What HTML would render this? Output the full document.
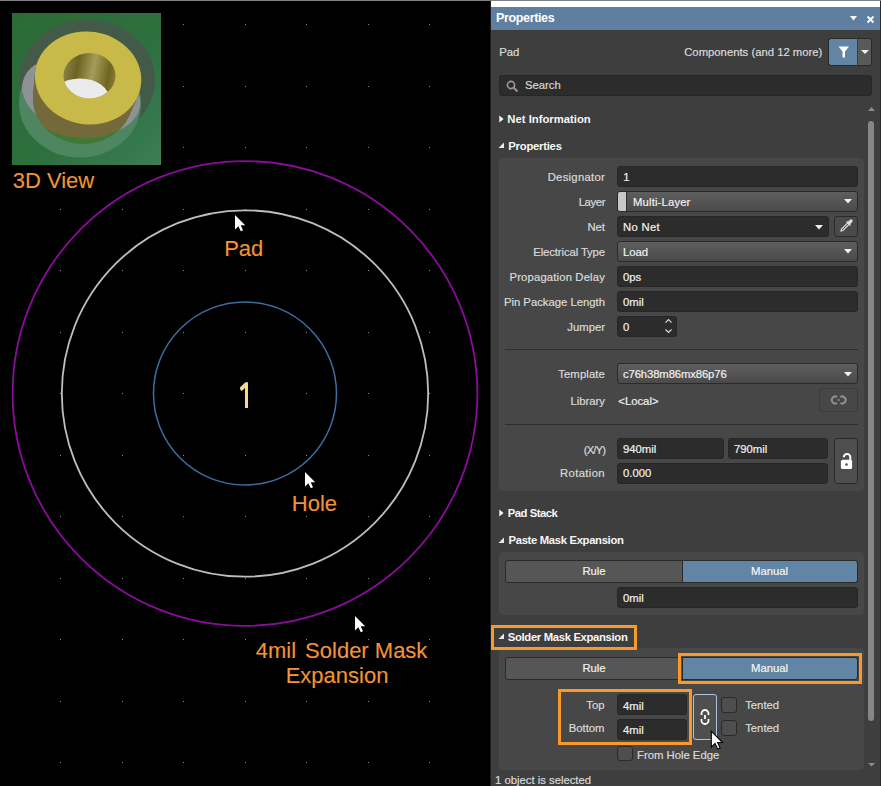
<!DOCTYPE html><html><head><meta charset="utf-8"><style>
html,body{margin:0;padding:0;}
body{width:881px;height:786px;background:#000;position:relative;overflow:hidden;font-family:"Liberation Sans",sans-serif;}
.t{position:absolute;white-space:pre;line-height:1;-webkit-text-stroke:0.2px currentColor;}
.r{position:absolute;box-sizing:border-box;}
svg{position:absolute;}
</style></head><body>
<svg width="491" height="786" style="left:0;top:0"><g fill="#8a8a8a"><rect x="60" y="24" width="1" height="1"/><rect x="60" y="86" width="1" height="1"/><rect x="60" y="147" width="1" height="1"/><rect x="60" y="209" width="1" height="1"/><rect x="60" y="270" width="1" height="1"/><rect x="60" y="332" width="1" height="1"/><rect x="60" y="393" width="1" height="1"/><rect x="60" y="455" width="1" height="1"/><rect x="60" y="516" width="1" height="1"/><rect x="60" y="578" width="1" height="1"/><rect x="60" y="639" width="1" height="1"/><rect x="60" y="701" width="1" height="1"/><rect x="60" y="762" width="1" height="1"/><rect x="122" y="24" width="1" height="1"/><rect x="122" y="86" width="1" height="1"/><rect x="122" y="147" width="1" height="1"/><rect x="122" y="209" width="1" height="1"/><rect x="122" y="270" width="1" height="1"/><rect x="122" y="332" width="1" height="1"/><rect x="122" y="393" width="1" height="1"/><rect x="122" y="455" width="1" height="1"/><rect x="122" y="516" width="1" height="1"/><rect x="122" y="578" width="1" height="1"/><rect x="122" y="639" width="1" height="1"/><rect x="122" y="701" width="1" height="1"/><rect x="122" y="762" width="1" height="1"/><rect x="183" y="24" width="1" height="1"/><rect x="183" y="86" width="1" height="1"/><rect x="183" y="147" width="1" height="1"/><rect x="183" y="209" width="1" height="1"/><rect x="183" y="270" width="1" height="1"/><rect x="183" y="332" width="1" height="1"/><rect x="183" y="393" width="1" height="1"/><rect x="183" y="455" width="1" height="1"/><rect x="183" y="516" width="1" height="1"/><rect x="183" y="578" width="1" height="1"/><rect x="183" y="639" width="1" height="1"/><rect x="183" y="701" width="1" height="1"/><rect x="183" y="762" width="1" height="1"/><rect x="245" y="24" width="1" height="1"/><rect x="245" y="86" width="1" height="1"/><rect x="245" y="147" width="1" height="1"/><rect x="245" y="209" width="1" height="1"/><rect x="245" y="270" width="1" height="1"/><rect x="245" y="332" width="1" height="1"/><rect x="245" y="393" width="1" height="1"/><rect x="245" y="455" width="1" height="1"/><rect x="245" y="516" width="1" height="1"/><rect x="245" y="578" width="1" height="1"/><rect x="245" y="639" width="1" height="1"/><rect x="245" y="701" width="1" height="1"/><rect x="245" y="762" width="1" height="1"/><rect x="306" y="24" width="1" height="1"/><rect x="306" y="86" width="1" height="1"/><rect x="306" y="147" width="1" height="1"/><rect x="306" y="209" width="1" height="1"/><rect x="306" y="270" width="1" height="1"/><rect x="306" y="332" width="1" height="1"/><rect x="306" y="393" width="1" height="1"/><rect x="306" y="455" width="1" height="1"/><rect x="306" y="516" width="1" height="1"/><rect x="306" y="578" width="1" height="1"/><rect x="306" y="639" width="1" height="1"/><rect x="306" y="701" width="1" height="1"/><rect x="306" y="762" width="1" height="1"/><rect x="368" y="24" width="1" height="1"/><rect x="368" y="86" width="1" height="1"/><rect x="368" y="147" width="1" height="1"/><rect x="368" y="209" width="1" height="1"/><rect x="368" y="270" width="1" height="1"/><rect x="368" y="332" width="1" height="1"/><rect x="368" y="393" width="1" height="1"/><rect x="368" y="455" width="1" height="1"/><rect x="368" y="516" width="1" height="1"/><rect x="368" y="578" width="1" height="1"/><rect x="368" y="639" width="1" height="1"/><rect x="368" y="701" width="1" height="1"/><rect x="368" y="762" width="1" height="1"/><rect x="429" y="24" width="1" height="1"/><rect x="429" y="86" width="1" height="1"/><rect x="429" y="147" width="1" height="1"/><rect x="429" y="209" width="1" height="1"/><rect x="429" y="270" width="1" height="1"/><rect x="429" y="332" width="1" height="1"/><rect x="429" y="393" width="1" height="1"/><rect x="429" y="455" width="1" height="1"/><rect x="429" y="516" width="1" height="1"/><rect x="429" y="578" width="1" height="1"/><rect x="429" y="639" width="1" height="1"/><rect x="429" y="701" width="1" height="1"/><rect x="429" y="762" width="1" height="1"/></g><circle cx="245" cy="393.5" r="232.4" fill="none" stroke="#8a0c9a" stroke-width="1.8"/><circle cx="245" cy="393.5" r="183.2" fill="none" stroke="#bebebe" stroke-width="1.8"/><circle cx="245" cy="393.5" r="91.5" fill="none" stroke="#416ca2" stroke-width="1.5"/><path transform="translate(235,215)" d="M0,0 L0,14.5 L3.4,11.2 L5.8,16.2 L8,15.2 L5.7,10.3 L10.2,10.3 Z" fill="#fff"/><path transform="translate(305,472)" d="M0,0 L0,14.5 L3.4,11.2 L5.8,16.2 L8,15.2 L5.7,10.3 L10.2,10.3 Z" fill="#fff"/><path transform="translate(355,616)" d="M0,0 L0,14.5 L3.4,11.2 L5.8,16.2 L8,15.2 L5.7,10.3 L10.2,10.3 Z" fill="#fff"/></svg>
<svg width="149" height="152" style="left:12px;top:13px" viewBox="12 13 149 152">
<defs>
<linearGradient id="gbg" x1="0" y1="0" x2="1" y2="1"><stop offset="0" stop-color="#2c6a35"/><stop offset="0.6" stop-color="#2f7040"/><stop offset="1" stop-color="#3b7e57"/></linearGradient>
<linearGradient id="hole" gradientUnits="userSpaceOnUse" x1="63" y1="70" x2="116" y2="80"><stop offset="0" stop-color="#8a8349"/><stop offset="0.25" stop-color="#6c6322"/><stop offset="0.55" stop-color="#a39c5a"/><stop offset="0.85" stop-color="#6f6520"/><stop offset="1" stop-color="#8b8034"/></linearGradient>
<clipPath id="hc"><ellipse cx="89.5" cy="75.7" rx="26" ry="22.7"/></clipPath>
<clipPath id="gc"><ellipse cx="80.7" cy="94" rx="60.2" ry="44" transform="rotate(5.7 80.7 94)"/></clipPath>
</defs>
<rect x="12" y="13" width="149" height="152" fill="url(#gbg)"/>
<ellipse cx="87.3" cy="80" rx="67.7" ry="60" fill="#435a48"/>
<ellipse cx="80" cy="103" rx="61" ry="54.6" fill="#4d8660"/>
<ellipse cx="81.2" cy="95" rx="59.9" ry="38.6" transform="rotate(12.5 81.2 95)" fill="#8e9297"/>
<path d="M33.0,98.0 L33.0,96.4 L33.1,94.8 L35.1,72.2 L35.3,70.6 L35.6,69.0 L35.9,67.4 L36.3,65.8 L36.7,64.3 L37.2,62.7 L37.8,61.2 L38.4,59.7 L39.1,58.2 L39.9,56.7 L40.7,55.3 L41.6,53.9 L42.5,52.5 L43.5,51.2 L44.5,49.9 L45.6,48.6 L46.8,47.4 L48.0,46.2 L49.2,45.0 L50.5,43.9 L51.8,42.8 L53.2,41.7 L54.6,40.7 L56.1,39.8 L57.6,38.9 L59.1,38.0 L60.7,37.2 L62.3,36.5 L63.9,35.8 L65.6,35.1 L67.3,34.5 L69.0,33.9 L70.8,33.5 L72.5,33.0 L74.3,32.6 L76.1,32.3 L77.9,32.0 L79.8,31.8 L81.6,31.6 L83.4,31.5 L85.3,31.5 L87.1,31.5 L89.0,31.5 L90.9,31.6 L92.7,31.8 L94.6,32.1 L96.4,32.3 L98.2,32.7 L100.0,33.1 L101.8,33.5 L103.6,34.0 L105.4,34.6 L107.1,35.2 L108.9,35.9 L110.6,36.6 L112.2,37.4 L113.9,38.2 L115.5,39.0 L117.0,40.0 L118.6,40.9 L120.1,41.9 L121.5,43.0 L123.0,44.1 L124.3,45.2 L125.7,46.4 L127.0,47.6 L128.2,48.8 L129.4,50.1 L130.6,51.4 L131.6,52.8 L132.7,54.1 L133.7,55.6 L134.6,57.0 L135.5,58.5 L136.3,59.9 L137.0,61.4 L137.7,63.0 L138.4,64.5 L138.9,66.1 L139.5,67.7 L139.9,69.3 L140.3,70.9 L140.6,72.5 L140.9,74.1 L141.1,75.7 L141.2,77.3 L141.3,79.0 L141.3,80.6 L141.2,82.2 L141.1,83.8 L140.9,85.4 L140.6,87.0 L140.3,88.6 L139.9,90.2 L139.5,91.7 L139.0,93.3 L138.4,94.8 L137.8,96.3 L129.4,115.2 L128.7,116.7 L127.9,118.2 L127.1,119.6 L126.3,121.0 L125.4,122.4 L124.5,123.7 L123.5,125.0 L122.4,126.3 L121.3,127.6 L120.2,128.8 L119.0,130.0 L117.7,131.1 L116.5,132.2 L115.1,133.2 L113.8,134.2 L112.4,135.2 L111.0,136.1 L109.5,137.0 L108.0,137.8 L106.5,138.6 L104.9,139.3 L103.3,140.0 L101.7,140.7 L100.1,141.2 L98.5,141.7 L96.8,142.2 L95.1,142.6 L93.4,143.0 L91.7,143.3 L90.0,143.6 L88.2,143.7 L86.5,143.9 L84.7,144.0 L83.0,144.0 L81.3,144.0 L79.5,143.9 L77.8,143.7 L76.0,143.6 L74.3,143.3 L72.6,143.0 L70.9,142.6 L69.2,142.2 L67.5,141.7 L65.9,141.2 L64.3,140.7 L62.7,140.0 L61.1,139.3 L59.5,138.6 L58.0,137.8 L56.5,137.0 L55.0,136.1 L53.6,135.2 L52.2,134.2 L50.9,133.2 L49.5,132.2 L48.3,131.1 L47.0,130.0 L45.8,128.8 L44.7,127.6 L43.6,126.3 L42.5,125.0 L41.5,123.7 L40.6,122.4 L39.7,121.0 L38.9,119.6 L38.1,118.2 L37.3,116.7 L36.6,115.2 L36.0,113.7 L35.4,112.2 L34.9,110.7 L34.5,109.1 L34.1,107.6 L33.8,106.0 L33.5,104.4 L33.3,102.8 L33.1,101.2 L33.0,99.6 Z" fill="#3e7a36"/>
<path d="M33.0,98.0 L33.0,96.4 L33.1,94.8 L35.1,72.2 L35.3,70.6 L35.6,69.0 L35.9,67.4 L36.3,65.8 L36.7,64.3 L37.2,62.7 L37.8,61.2 L38.4,59.7 L39.1,58.2 L39.9,56.7 L40.7,55.3 L41.6,53.9 L42.5,52.5 L43.5,51.2 L44.5,49.9 L45.6,48.6 L46.8,47.4 L48.0,46.2 L49.2,45.0 L50.5,43.9 L51.8,42.8 L53.2,41.7 L54.6,40.7 L56.1,39.8 L57.6,38.9 L59.1,38.0 L60.7,37.2 L62.3,36.5 L63.9,35.8 L65.6,35.1 L67.3,34.5 L69.0,33.9 L70.8,33.5 L72.5,33.0 L74.3,32.6 L76.1,32.3 L77.9,32.0 L79.8,31.8 L81.6,31.6 L83.4,31.5 L85.3,31.5 L87.1,31.5 L89.0,31.5 L90.9,31.6 L92.7,31.8 L94.6,32.1 L96.4,32.3 L98.2,32.7 L100.0,33.1 L101.8,33.5 L103.6,34.0 L105.4,34.6 L107.1,35.2 L108.9,35.9 L110.6,36.6 L112.2,37.4 L113.9,38.2 L115.5,39.0 L117.0,40.0 L118.6,40.9 L120.1,41.9 L121.5,43.0 L123.0,44.1 L124.3,45.2 L125.7,46.4 L127.0,47.6 L128.2,48.8 L129.4,50.1 L130.6,51.4 L131.6,52.8 L132.7,54.1 L133.7,55.6 L134.6,57.0 L135.5,58.5 L136.3,59.9 L137.0,61.4 L137.7,63.0 L138.4,64.5 L138.9,66.1 L139.5,67.7 L139.9,69.3 L140.3,70.9 L140.6,72.5 L140.9,74.1 L141.1,75.7 L141.2,77.3 L141.3,79.0 L141.3,80.6 L141.2,82.2 L141.1,83.8 L140.9,85.4 L140.6,87.0 L140.3,88.6 L139.9,90.2 L139.5,91.7 L139.0,93.3 L138.4,94.8 L137.8,96.3 L129.4,115.2 L128.7,116.7 L127.9,118.2 L127.1,119.6 L126.3,121.0 L125.4,122.4 L124.5,123.7 L123.5,125.0 L122.4,126.3 L121.3,127.6 L120.2,128.8 L119.0,130.0 L117.7,131.1 L116.5,132.2 L115.1,133.2 L113.8,134.2 L112.4,135.2 L111.0,136.1 L109.5,137.0 L108.0,137.8 L106.5,138.6 L104.9,139.3 L103.3,140.0 L101.7,140.7 L100.1,141.2 L98.5,141.7 L96.8,142.2 L95.1,142.6 L93.4,143.0 L91.7,143.3 L90.0,143.6 L88.2,143.7 L86.5,143.9 L84.7,144.0 L83.0,144.0 L81.3,144.0 L79.5,143.9 L77.8,143.7 L76.0,143.6 L74.3,143.3 L72.6,143.0 L70.9,142.6 L69.2,142.2 L67.5,141.7 L65.9,141.2 L64.3,140.7 L62.7,140.0 L61.1,139.3 L59.5,138.6 L58.0,137.8 L56.5,137.0 L55.0,136.1 L53.6,135.2 L52.2,134.2 L50.9,133.2 L49.5,132.2 L48.3,131.1 L47.0,130.0 L45.8,128.8 L44.7,127.6 L43.6,126.3 L42.5,125.0 L41.5,123.7 L40.6,122.4 L39.7,121.0 L38.9,119.6 L38.1,118.2 L37.3,116.7 L36.6,115.2 L36.0,113.7 L35.4,112.2 L34.9,110.7 L34.5,109.1 L34.1,107.6 L33.8,106.0 L33.5,104.4 L33.3,102.8 L33.1,101.2 L33.0,99.6 Z" fill="#74693a" clip-path="url(#gc)"/>
<ellipse cx="88.1" cy="78" rx="53.3" ry="46.4" transform="rotate(8 88.1 78)" fill="#c8b948"/>
<ellipse cx="89.5" cy="75.7" rx="26" ry="22.7" fill="url(#hole)"/>
<ellipse cx="80" cy="100.4" rx="30" ry="22" fill="#ebebeb" clip-path="url(#hc)"/>
</svg>
<div class="t" style="left:12.70px;top:170px;font-size:22px;color:#f39436;-webkit-text-stroke:0.12px #f39436;">3D View</div>
<div class="t" style="left:224.20px;top:238px;font-size:22px;color:#f39436;-webkit-text-stroke:0.12px #f39436;">Pad</div>
<div class="t" style="left:291.80px;top:493px;font-size:22px;color:#f39436;-webkit-text-stroke:0.12px #f39436;">Hole</div>
<div class="t" style="left:255.70px;top:640px;font-size:22px;color:#f39436;-webkit-text-stroke:0.12px #f39436;">4mil</div>
<div class="t" style="left:305.10px;top:640px;font-size:22px;color:#f39436;-webkit-text-stroke:0.12px #f39436;">Solder Mask</div>
<div class="t" style="left:285.70px;top:665px;font-size:22px;color:#f39436;-webkit-text-stroke:0.12px #f39436;">Expansion</div>
<svg width="20" height="40" style="left:235px;top:375px"><g transform="translate(-235,-375)"><path d="M248,382.2 L245.4,382.2 L240.2,387.3 Q239.6,388.2 240.2,389.3 L241,390.4 Q241.6,391.1 242.4,390.4 L245,387.9 L245,408 L248,408 Z" fill="#f5d98c"/></g></svg>
<div class="r" style="left:0px;top:0px;width:881px;height:1px;background:#7f7f7f;"></div>
<div class="r" style="left:491px;top:1px;width:389px;height:6px;background:#ffffff;"></div>
<div class="r" style="left:491px;top:7px;width:389px;height:23px;background:#5f7fa0;"></div>
<div class="r" style="left:491px;top:30px;width:389px;height:756px;background:#3e3e3e;"></div>
<div class="r" style="left:880px;top:1px;width:1px;height:785px;background:#2a2a2a;"></div>
<div class="r" style="left:490px;top:1px;width:1px;height:785px;background:#1c1c1c;"></div>
<div class="t" style="left:496.00px;top:12px;font-size:12.5px;color:#ffffff;font-weight:700;-webkit-text-stroke:0;letter-spacing:-0.35px;">Properties</div>
<svg width="9" height="6.5" style="left:849.1px;top:15.350000000000001px"><path d="M1,1 L8,1 L4.5,5.5 Z" fill="#ffffff"/></svg>
<svg width="9" height="9" style="left:865.5px;top:14.5px"><path d="M1.5,1.5 L7.5,7.5 M7.5,1.5 L1.5,7.5" stroke="#fff" stroke-width="1.8"/></svg>
<div class="t" style="left:499.20px;top:47px;font-size:11.3px;color:#dadada;">Pad</div>
<div class="t" style="left:684.20px;top:47px;font-size:11.3px;color:#dadada;">Components (and 12 more)</div>
<div class="r" style="left:828px;top:38px;width:44px;height:28px;background:#595959;border-radius:3px;border:1px solid #2a2a2a;"></div>
<div class="r" style="left:828px;top:38px;width:30px;height:28px;background:#6284a5;border-radius:3px 0 0 3px;border:1px solid #2a2a2a;border-right:1px solid #3a3a3a;"></div>
<svg width="12" height="12" style="left:837.5px;top:46px"><path d="M0.5,0.5 L11,0.5 L7,5.5 L7,11.5 L4.5,11.5 L4.5,5.5 Z" fill="#fff"/></svg>
<svg width="10" height="6" style="left:859.8px;top:49.4px"><path d="M1,1 L9,1 L5.0,5 Z" fill="#f0f0f0"/></svg>
<div class="r" style="left:499px;top:75px;width:373px;height:21px;background:#2c2c2c;border-radius:3px;border:1px solid #262626;"></div>
<svg width="13" height="13" style="left:506px;top:80px"><circle cx="5" cy="5" r="3.6" fill="none" stroke="#9a9a9a" stroke-width="1.6"/><path d="M7.6,7.6 L11.5,11.5" stroke="#9a9a9a" stroke-width="1.9"/></svg>
<div class="t" style="left:525.00px;top:80px;font-size:11.3px;color:#d6d6d6;">Search</div>
<svg width="9" height="6" style="left:867px;top:105.5px"><path d="M1,5 L4.5,1 L8,5 Z" fill="#8c8c8c"/></svg>
<div class="r" style="left:868px;top:121px;width:6px;height:600px;background:#868686;border-radius:3px;"></div>
<svg width="9" height="6" style="left:867px;top:762px"><path d="M1,1 L8,1 L4.5,4.5 Z" fill="#8c8c8c"/></svg>
<svg width="6" height="9" style="left:499px;top:114.6px"><path d="M0.3,0.4 L4.6,4 L0.3,7.6 Z" fill="#f4f4f4"/></svg>
<div class="t" style="left:507.30px;top:114px;font-size:11.3px;color:#f6f6f6;font-weight:700;-webkit-text-stroke:0;">Net Information</div>
<svg width="7" height="7" style="left:498px;top:141.6px"><path d="M6,0.5 L6,6 L0.5,6 Z" fill="#e8e8e8"/></svg>
<div class="t" style="left:508.30px;top:141px;font-size:11.3px;color:#f6f6f6;font-weight:700;-webkit-text-stroke:0;letter-spacing:-0.25px;">Properties</div>
<div class="r" style="left:499px;top:158px;width:365px;height:333px;background:#474747;border-radius:4px;"></div>
<div class="t" style="right:276.00px;top:172px;font-size:11.3px;color:#dadada;letter-spacing:0.27px;">Designator</div>
<div class="t" style="right:276.00px;top:197px;font-size:11.3px;color:#dadada;letter-spacing:-0.4px;">Layer</div>
<div class="t" style="right:276.00px;top:222px;font-size:11.3px;color:#dadada;">Net</div>
<div class="t" style="right:276.00px;top:247px;font-size:11.3px;color:#dadada;letter-spacing:-0.1px;">Electrical Type</div>
<div class="t" style="right:276.00px;top:272px;font-size:11.3px;color:#dadada;letter-spacing:0.15px;">Propagation Delay</div>
<div class="t" style="right:276.00px;top:297px;font-size:11.3px;color:#dadada;">Pin Package Length</div>
<div class="t" style="right:276.00px;top:322px;font-size:11.3px;color:#dadada;">Jumper</div>
<div class="r" style="left:617px;top:166px;width:241px;height:21px;background:#2c2c2c;border-radius:3px;border:1px solid #262626;"></div>
<div class="t" style="left:623.30px;top:172px;font-size:11.3px;color:#f0f0f0;">1</div>
<div class="r" style="left:617px;top:191px;width:241px;height:21px;background:linear-gradient(#5e5e5e,#4a4a4a);border-radius:3px;border:1px solid #2a2a2a;"></div>
<div class="r" style="left:618px;top:192px;width:9px;height:19px;background:#c8c8c8;border-radius:2px 0 0 2px;border-right:1px solid #2e2e2e;"></div>
<div class="t" style="left:633.00px;top:197px;font-size:11.3px;color:#f0f0f0;letter-spacing:0.15px;">Multi-Layer</div>
<svg width="10" height="6.5" style="left:843.0px;top:197.75px"><path d="M1,1 L9,1 L5.0,5.5 Z" fill="#f0f0f0"/></svg>
<div class="r" style="left:617px;top:216px;width:212px;height:21px;background:#2c2c2c;border-radius:3px;border:1px solid #262626;"></div>
<div class="t" style="left:623.00px;top:222px;font-size:11.3px;color:#f0f0f0;letter-spacing:0.3px;">No Net</div>
<svg width="10" height="6.5" style="left:814.0px;top:223.75px"><path d="M1,1 L9,1 L5.0,5.5 Z" fill="#f0f0f0"/></svg>
<div class="r" style="left:834px;top:216px;width:24px;height:21px;background:#4a4a4a;border-radius:3px;border:1px solid #2a2a2a;"></div>
<svg width="16" height="16" style="left:838px;top:218px"><path d="M3,13 L3.5,11 L10,4.5 L11.5,6 L5,12.5 Z" fill="none" stroke="#e0e0e0" stroke-width="1.1"/><path d="M9.5,4 L12,1.8 A1.4,1.4 0 0 1 14.2,4 L12,6.5 Z" fill="#e0e0e0"/><path d="M8.5,3.5 L12.5,7.5" stroke="#e0e0e0" stroke-width="1.3"/></svg>
<div class="r" style="left:617px;top:241px;width:241px;height:21px;background:linear-gradient(#5e5e5e,#4a4a4a);border-radius:3px;border:1px solid #2a2a2a;"></div>
<div class="t" style="left:623.00px;top:247px;font-size:11.3px;color:#f0f0f0;">Load</div>
<svg width="10" height="6.5" style="left:843.0px;top:247.75px"><path d="M1,1 L9,1 L5.0,5.5 Z" fill="#f0f0f0"/></svg>
<div class="r" style="left:617px;top:266px;width:241px;height:21px;background:#2c2c2c;border-radius:3px;border:1px solid #262626;"></div>
<div class="t" style="left:623.00px;top:272px;font-size:11.3px;color:#f0f0f0;">0ps</div>
<div class="r" style="left:617px;top:291px;width:241px;height:21px;background:#2c2c2c;border-radius:3px;border:1px solid #262626;"></div>
<div class="t" style="left:623.00px;top:297px;font-size:11.3px;color:#f0f0f0;">0mil</div>
<div class="r" style="left:617px;top:316px;width:60px;height:21px;background:#2c2c2c;border-radius:3px;border:1px solid #262626;"></div>
<div class="t" style="left:623.00px;top:322px;font-size:11.3px;color:#f0f0f0;">0</div>
<svg width="10" height="18" style="left:664px;top:318px"><path d="M1.5,4.6 L4.5,1.6 L7.5,4.6 M1.5,11.5 L4.5,14.5 L7.5,11.5" fill="none" stroke="#d8d8d8" stroke-width="1.2"/></svg>
<div class="r" style="left:505px;top:349px;width:353px;height:1px;background:#2e2e2e;"></div>
<div class="t" style="right:276.00px;top:369px;font-size:11.3px;color:#dadada;letter-spacing:0.12px;">Template</div>
<div class="r" style="left:617px;top:363px;width:241px;height:21px;background:linear-gradient(#5e5e5e,#4a4a4a);border-radius:3px;border:1px solid #2a2a2a;"></div>
<div class="t" style="left:623.00px;top:369px;font-size:11.3px;color:#f0f0f0;letter-spacing:-0.12px;">c76h38m86mx86p76</div>
<svg width="10" height="6.5" style="left:843.0px;top:370.75px"><path d="M1,1 L9,1 L5.0,5.5 Z" fill="#f0f0f0"/></svg>
<div class="t" style="right:276.00px;top:396px;font-size:11.3px;color:#dadada;">Library</div>
<div class="t" style="left:618.30px;top:396px;font-size:11.3px;color:#f0f0f0;">&lt;Local&gt;</div>
<div class="r" style="left:819px;top:388px;width:39px;height:24px;background:#474747;border-radius:3px;border:1px solid #3c3c3c;"></div>
<svg width="20" height="14" style="left:829px;top:393px"><g transform="translate(-829,-393)"><path d="M837.1,397 A3.5,3.5 0 1 0 837.1,403 M840.3,397 A3.5,3.5 0 1 1 840.3,403" fill="none" stroke="#8e8e8e" stroke-width="2"/><circle cx="838.7" cy="400" r="1.1" fill="#8e8e8e"/></g></svg>
<div class="r" style="left:505px;top:424px;width:353px;height:1px;background:#2e2e2e;"></div>
<div class="t" style="right:276.00px;top:445px;font-size:11.3px;color:#dadada;letter-spacing:-0.9px;">(X/Y)</div>
<div class="r" style="left:617px;top:438px;width:107px;height:21px;background:#2c2c2c;border-radius:3px;border:1px solid #262626;"></div>
<div class="t" style="left:623.00px;top:444px;font-size:11.3px;color:#f0f0f0;">940mil</div>
<div class="r" style="left:728px;top:438px;width:100px;height:21px;background:#2c2c2c;border-radius:3px;border:1px solid #262626;"></div>
<div class="t" style="left:734.00px;top:444px;font-size:11.3px;color:#f0f0f0;">790mil</div>
<div class="t" style="right:276.00px;top:468px;font-size:11.3px;color:#dadada;letter-spacing:0.35px;">Rotation</div>
<div class="r" style="left:617px;top:463px;width:211px;height:21px;background:#2c2c2c;border-radius:3px;border:1px solid #262626;"></div>
<div class="t" style="left:623.00px;top:468px;font-size:11.3px;color:#f0f0f0;">0.000</div>
<div class="r" style="left:834px;top:438px;width:24px;height:46px;background:#4e4e4e;border-radius:3px;border:1px solid #2a2a2a;"></div>
<svg width="32" height="53" style="left:830px;top:435px"><g transform="translate(-830,-435)"><path d="M850.3,460.5 L850.3,457.3 A3.25,3.25 0 0 0 843.8,457.3" fill="none" stroke="#fff" stroke-width="2"/><rect x="840.9" y="459.8" width="11.2" height="9.2" rx="1.6" fill="#fff"/><circle cx="846.5" cy="464.5" r="1.25" fill="#4e4e4e"/></g></svg>
<svg width="6" height="9" style="left:499px;top:508.8px"><path d="M0.3,0.4 L4.6,4 L0.3,7.6 Z" fill="#f4f4f4"/></svg>
<div class="t" style="left:507.80px;top:508px;font-size:11.3px;color:#f6f6f6;font-weight:700;-webkit-text-stroke:0;letter-spacing:-0.5px;">Pad Stack</div>
<svg width="7" height="7" style="left:498px;top:537px"><path d="M6,0.5 L6,6 L0.5,6 Z" fill="#e8e8e8"/></svg>
<div class="t" style="left:508.50px;top:535px;font-size:11.3px;color:#f6f6f6;font-weight:700;-webkit-text-stroke:0;letter-spacing:-0.34px;">Paste Mask Expansion</div>
<div class="r" style="left:499px;top:552px;width:365px;height:63px;background:#474747;border-radius:4px;"></div>
<div class="r" style="left:505px;top:560px;width:353px;height:23px;background:#565656;border-radius:3px;border:1px solid #2a2a2a;"></div>
<div class="r" style="left:682px;top:560px;width:176px;height:23px;background:#6284a5;border-radius:0 3px 3px 0;border:1px solid #2a2a2a;"></div>
<div class="t" style="left:494.00px;width:200px;text-align:center;top:566px;font-size:11.3px;color:#f0f0f0;">Rule</div>
<div class="t" style="left:669.50px;width:200px;text-align:center;top:566px;font-size:11.3px;color:#f4f4f4;">Manual</div>
<div class="r" style="left:617px;top:587px;width:241px;height:21px;background:#2c2c2c;border-radius:3px;border:1px solid #262626;"></div>
<div class="t" style="left:623.00px;top:593px;font-size:11.3px;color:#f0f0f0;">0mil</div>
<svg width="7" height="7" style="left:498px;top:633px"><path d="M6,0.5 L6,6 L0.5,6 Z" fill="#e8e8e8"/></svg>
<div class="t" style="left:507.80px;top:632px;font-size:11.3px;color:#f6f6f6;font-weight:700;-webkit-text-stroke:0;letter-spacing:-0.34px;">Solder Mask Expansion</div>
<div class="r" style="left:499px;top:648px;width:365px;height:122px;background:#474747;border-radius:4px;"></div>
<div class="r" style="left:505px;top:657px;width:353px;height:23px;background:#565656;border-radius:3px;border:1px solid #2a2a2a;"></div>
<div class="r" style="left:682px;top:657px;width:176px;height:23px;background:#6284a5;border-radius:0 3px 3px 0;border:1px solid #2a2a2a;"></div>
<div class="t" style="left:494.00px;width:200px;text-align:center;top:663px;font-size:11.3px;color:#f0f0f0;">Rule</div>
<div class="t" style="left:669.50px;width:200px;text-align:center;top:663px;font-size:11.3px;color:#f4f4f4;">Manual</div>
<div class="t" style="right:276.50px;top:700px;font-size:11.3px;color:#dadada;">Top</div>
<div class="r" style="left:617px;top:694px;width:70px;height:21px;background:#2c2c2c;border-radius:3px;border:1px solid #262626;"></div>
<div class="t" style="left:623.00px;top:701px;font-size:11.3px;color:#f0f0f0;">4mil</div>
<div class="t" style="right:276.50px;top:723px;font-size:11.3px;color:#dadada;">Bottom</div>
<div class="r" style="left:617px;top:719px;width:70px;height:21px;background:#2c2c2c;border-radius:3px;border:1px solid #262626;"></div>
<div class="t" style="left:623.00px;top:725px;font-size:11.3px;color:#f0f0f0;">4mil</div>
<div class="r" style="left:693px;top:694px;width:24px;height:46px;background:#4f4f4f;border-radius:3px;border:1px solid #a9c4e0;"></div>
<svg width="12" height="16" style="left:699px;top:709px"><path d="M2.5,6 L2.5,4.5 A3.5,3.5 0 0 1 9.5,4.5 L9.5,6 M2.5,10 L2.5,11.5 A3.5,3.5 0 0 0 9.5,11.5 L9.5,10 M6,6 L6,10" fill="none" stroke="#fff" stroke-width="1.8"/></svg>
<div class="r" style="left:721px;top:697px;width:16px;height:16px;background:#4e4e4e;border-radius:3px;border:1px solid #2a2a2a;"></div>
<div class="r" style="left:721px;top:720px;width:16px;height:16px;background:#4e4e4e;border-radius:3px;border:1px solid #2a2a2a;"></div>
<div class="t" style="left:745.20px;top:700px;font-size:11.3px;color:#dadada;">Tented</div>
<div class="t" style="left:745.20px;top:723px;font-size:11.3px;color:#dadada;">Tented</div>
<div class="r" style="left:617px;top:746px;width:16px;height:15px;background:#4e4e4e;border-radius:3px;border:1px solid #2a2a2a;"></div>
<div class="t" style="left:637.00px;top:750px;font-size:11.3px;color:#dadada;">From Hole Edge</div>
<div class="t" style="left:495.00px;top:775px;font-size:11.3px;color:#dadada;">1 object is selected</div>
<div class="r" style="left:491px;top:625px;width:146px;height:25px;background:transparent;border:3px solid #f8992b;"></div>
<div class="r" style="left:678px;top:653px;width:184px;height:31px;background:transparent;border:3px solid #f8992b;"></div>
<div class="r" style="left:558px;top:689px;width:134px;height:56px;background:transparent;border:3px solid #f8992b;"></div>
<svg width="18" height="24" style="left:710px;top:730px"><path transform="translate(1.3,1.2) scale(1.1)" d="M0,0 L0,14.5 L3.4,11.2 L5.8,16.2 L8,15.2 L5.7,10.3 L10.2,10.3 Z" fill="#fff" stroke="#000" stroke-width="1"/></svg>
</body></html>
